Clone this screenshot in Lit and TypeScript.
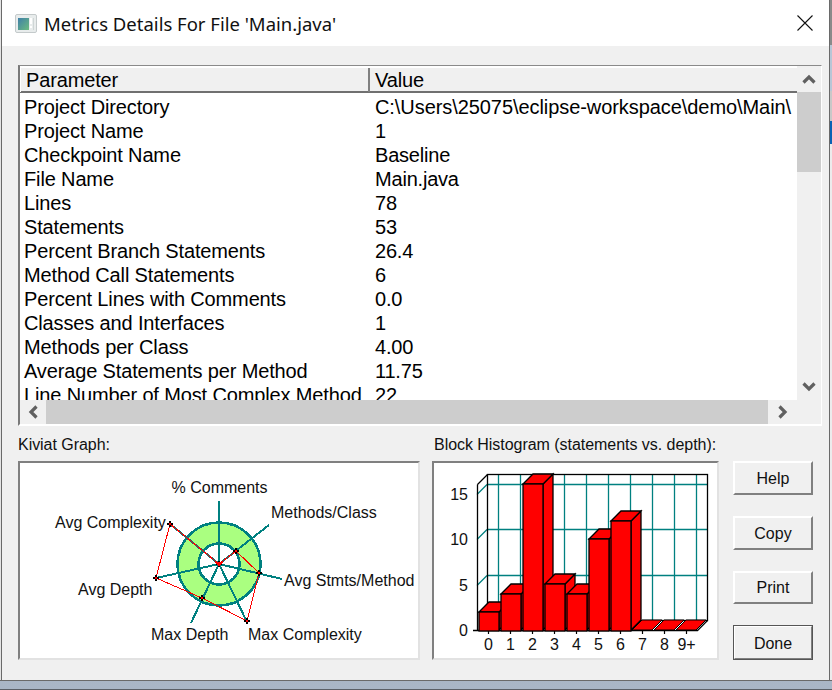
import { LitElement, html, css, svg } from "lit";
import { customElement } from "lit/decorators.js";

const ROWS: [string, string][] = [
  ["Project Directory", "C:\\Users\\25075\\eclipse-workspace\\demo\\Main\\"],
  ["Project Name", "1"],
  ["Checkpoint Name", "Baseline"],
  ["File Name", "Main.java"],
  ["Lines", "78"],
  ["Statements", "53"],
  ["Percent Branch Statements", "26.4"],
  ["Method Call Statements", "6"],
  ["Percent Lines with Comments", "0.0"],
  ["Classes and Interfaces", "1"],
  ["Methods per Class", "4.00"],
  ["Average Statements per Method", "11.75"],
  ["Line Number of Most Complex Method", "22"],
];

const CENTER = [219, 564];
const SPOKES = [
  [219, 501],
  [269, 525],
  [282, 579],
  [247, 622],
  [191, 623],
  [156, 578],
  [170, 524],
];
const POLY = [
  [219, 564],
  [236, 551],
  [259, 573],
  [247, 621],
  [202, 598],
  [156, 578],
  [170, 524],
];
const KIVIAT_LABELS: [string, number, number][] = [
  ["% Comments", 171.5, 493],
  ["Methods/Class", 271, 518],
  ["Avg Complexity", 55, 528],
  ["Avg Stmts/Method", 284, 586],
  ["Avg Depth", 78, 595],
  ["Max Depth", 151, 640],
  ["Max Complexity", 248, 640],
];

const BARS = [18, 36, 146, 46, 36, 91, 109, 0, 0, 0];
const X_LABELS = ["0", "1", "2", "3", "4", "5", "6", "7", "8", "9+"];
const Y_LABELS: [string, number][] = [
  ["15", 500],
  ["10", 545],
  ["5", 591],
  ["0", 636],
];
const GRID_X = [498, 520, 542, 564, 586, 608, 630, 652, 674, 696];
const GRID_Y = [484, 529, 575];

const chevron = (d: string) => html`<svg class="chev" viewBox="0 0 14 14" width="14" height="14">
  <path d=${d} fill="none" stroke="#606060" stroke-width="3.2"></path>
</svg>`;

@customElement("app-root")
export class AppRoot extends LitElement {
  static styles = css`
    :host {
      display: block;
      width: 832px;
      height: 690px;
      box-sizing: border-box;
      overflow: hidden;
      border-bottom: 1px solid #5a5f66;
      background: linear-gradient(#c9d3de, #a9b6c6);
      font-family: "Liberation Sans", Arial, sans-serif;
      color: #000;
    }
    .desk {
      display: flex;
      height: 680px;
      border-bottom: 1px solid #6a6a6a;
      box-sizing: content-box;
    }
    .edge-left {
      width: 1px;
      background: #e4e4e4;
    }
    .edge-right {
      width: 2px;
      display: flex;
      flex-direction: column;
    }
    .edge-right i {
      display: block;
    }
    .e1 { height: 45px; background: #8a8a8a; }
    .e2 { height: 46px; background: #b8c6d6; }
    .e3 { height: 30px; background: #c8c8c8; }
    .e4 { height: 23px; background: #0a62b4; }
    .e5 { flex: 1; background: #ececec; }
    .window {
      width: 829px;
      box-sizing: border-box;
      border-left: 1px solid #6a6a6a;
      border-right: 1px solid #6a6a6a;
      display: flex;
      flex-direction: column;
      background: #f0f0f0;
    }
    .titlebar {
      height: 46px;
      flex: none;
      background: #fff;
      display: flex;
      align-items: center;
      padding: 0 16px 0 13px;
      gap: 7px;
    }
    .title {
      flex: 1;
      font-family: "Noto Sans", sans-serif;
      font-size: 18.5px;
      color: #111;
      white-space: nowrap;
    }
    .body {
      flex: 1;
      display: flex;
      flex-direction: column;
      padding: 19px 7px 19px 16px;
      min-height: 0;
    }
    .frame {
      height: 361px;
      box-sizing: border-box;
      border-top: 1px solid #8a8a8a;
      border-left: 2px solid #7a7a7a;
      border-right: 1px solid #fff;
      border-bottom: 2px solid #fff;
      display: grid;
      grid-template-columns: 777px 24px;
      grid-template-rows: 334px 24px;
    }
    .list {
      background: #fff;
      overflow: hidden;
      display: flex;
      flex-direction: column;
      padding-top: 1px;
      letter-spacing: -0.14px;
    }
    .head {
      display: grid;
      grid-template-columns: 348px 1fr;
      height: 26px;
      flex: none;
      box-sizing: border-box;
      border-top: 1px solid #fff;
      border-bottom: 2px solid #707070;
      background: #f0f0f0;
      font-size: 20px;
      line-height: 24px;
    }
    .head div {
      padding-left: 5px;
      border-left: 1px solid #fff;
    }
    .head div + div {
      border-left: 2px solid #808080;
      padding-left: 5px;
    }
    .rows {
      padding-top: 2px;
    }
    .row {
      display: grid;
      grid-template-columns: 350px 1fr;
      height: 24px;
      line-height: 24px;
      font-size: 20px;
      white-space: nowrap;
    }
    .row div:first-child {
      padding-left: 4px;
    }
    .row div:last-child {
      padding-left: 5px;
      overflow: hidden;
      letter-spacing: -0.2px;
    }
    .row:first-child div:last-child {
      letter-spacing: -0.07px;
    }
    .vbar {
      display: flex;
      flex-direction: column;
      background: #f0f0f0;
    }
    .vbar .thumb {
      height: 80px;
      flex: none;
      background: #cdcdcd;
    }
    .vbar .spacer {
      flex: 1;
    }
    .btnv {
      height: 26px;
      flex: none;
      display: flex;
      align-items: center;
      justify-content: center;
    }
    .hbar {
      display: flex;
      background: #f0f0f0;
    }
    .hbar .btnh {
      width: 26px;
      flex: none;
      display: flex;
      align-items: center;
      justify-content: center;
    }
    .hbar .btnh.end {
      width: 29px;
    }
    .hbar .thumb {
      flex: 1;
      background: #cdcdcd;
    }
    .corner {
      background: #f0f0f0;
    }
    .chev {
      display: block;
    }
    .lower {
      flex: 1;
      display: grid;
      grid-template-columns: 402px 287px 80px;
      column-gap: 12px;
      grid-template-rows: 35px 199px;
    }
    .lower .cap {
      font-size: 16px;
      line-height: 38px;
      white-space: nowrap;
      color: #111;
      letter-spacing: -0.04px;
    }
    .cap.h {
      padding-left: 2px;
    }
    .box {
      box-sizing: border-box;
      border-top: 2px solid #808080;
      border-left: 2px solid #808080;
      border-right: 2px solid #e2e2e2;
      border-bottom: 2px solid #e2e2e2;
      background: #fff;
      overflow: hidden;
    }
    .box svg {
      display: block;
    }
    .box text {
      font-family: "Liberation Sans", Arial, sans-serif;
      font-size: 16px;
      fill: #111;
    }
    .btns {
      grid-column: 3;
      grid-row: 2;
      display: flex;
      flex-direction: column;
      gap: 21px;
      margin-left: 2px;
      width: 80px;
    }
    .btn {
      height: 34px;
      box-sizing: border-box;
      border-top: 2px solid #fff;
      border-left: 2px solid #fff;
      border-right: 2px solid #808080;
      border-bottom: 2px solid #808080;
      background: #f0f0f0;
      font-family: inherit;
      font-size: 16px;
      color: #111;
      padding: 2px 0 0;
    }
    .btn.def {
      outline: 1px solid #555;
      outline-offset: -1px;
      height: 35px;
    }
  `;

  private kiviat() {
    return svg`<svg width="398" height="195" viewBox="20 463 398 195">
      <g shape-rendering="crispEdges">
        <circle cx="219" cy="564" r="41.5" fill="#aaff80" stroke="#008080" stroke-width="2.6"></circle>
        <circle cx="219" cy="564" r="20.5" fill="#fff" stroke="#008080" stroke-width="2.6"></circle>
        ${SPOKES.map(
          ([x, y]) =>
            svg`<line x1=${CENTER[0]} y1=${CENTER[1]} x2=${x} y2=${y} stroke="#008080" stroke-width="2"></line>`
        )}
        <polygon points=${POLY.map((p) => p.join(",")).join(" ")} fill="none" stroke="#ff0000" stroke-width="1"></polygon>
        ${POLY.map(
          ([x, y]) => svg`<path d="M${x - 3} ${y}H${x + 3}M${x} ${y - 3}V${y + 3}" stroke="#000" stroke-width="2" fill="none"></path>
            <rect x=${x - 1} y=${y - 1} width="2" height="2" fill="#f00"></rect>`
        )}
        <polygon points="215,562 223,562 219,567" fill="#f00"></polygon>
      </g>
      ${KIVIAT_LABELS.map(([t, x, y]) => svg`<text x=${x} y=${y}>${t}</text>`)}
    </svg>`;
  }

  private bar(i: number, h: number) {
    const x = 479 + 22 * i;
    const base = 630;
    const top = base - h;
    if (h === 0) {
      const xf = 632 + 22 * (i - 7);
      return svg`<polygon points="${xf},630 ${xf + 10},620 ${xf + 30},620 ${xf + 20},630" fill="#f00" stroke="#000" stroke-width="1"></polygon>
        ${i > 7 ? svg`<line x1=${xf - 1} y1="630" x2=${xf + 7} y2="622" stroke="#fff" stroke-width="1"></line>` : null}`;
    }
    return svg`
      <polygon points="${x + 20},${top} ${x + 30},${top - 10} ${x + 30},${base - 10} ${x + 20},${base}" fill="#f00" stroke="#000" stroke-width="1.3"></polygon>
      <polygon points="${x},${top} ${x + 10},${top - 10} ${x + 30},${top - 10} ${x + 20},${top}" fill="#f00" stroke="#000" stroke-width="1.3"></polygon>
      <rect x=${x} y=${top} width="20" height=${h + 1} fill="#f00" stroke="#000" stroke-width="1.3"></rect>`;
  }

  private histogram() {
    return svg`<svg width="283" height="195" viewBox="434 463 283 195">
      <g fill="none">
        ${GRID_X.map((x) => svg`<line x1=${x + 0.5} y1="474" x2=${x + 0.5} y2="620" stroke="#008080" stroke-width="1.3"></line>`)}
        ${GRID_Y.map((y) => svg`<line x1="487" y1=${y + 0.5} x2="707" y2=${y + 0.5} stroke="#008080" stroke-width="1.3"></line>`)}
        ${GRID_Y.map((y) => svg`<line x1="477" y1=${y + 10.5} x2="487" y2=${y + 0.5} stroke="#008080" stroke-width="1.2"></line>`)}
        <rect x="487.5" y="474.5" width="220" height="146" stroke="#000" stroke-width="1.3"></rect>
        <path d="M477.5 484.5L487.5 474.5M477.5 484.5V630.5H697.5L707.5 620.5M473 630.5H477" stroke="#000" stroke-width="1.3"></path>
        ${X_LABELS.map((_, i) => svg`<line x1=${488.5 + 22 * i} y1="630" x2=${488.5 + 22 * i} y2="634" stroke="#000" stroke-width="1.2"></line>`)}
        ${BARS.map((h, i) => this.bar(i, h))}
      </g>
      ${X_LABELS.map((t, i) => svg`<text x=${488.5 + 22 * i} y="650" text-anchor="middle">${t}</text>`)}
      ${Y_LABELS.map(([t, y]) => svg`<text x="468" y=${y} text-anchor="end">${t}</text>`)}
    </svg>`;
  }

  render() {
    return html`
      <div class="desk">
        <div class="edge-left"></div>
        <div class="window">
          <div class="titlebar">
            <svg width="22" height="19" viewBox="0 0 22 19">
              <rect x="0.5" y="0.5" width="21" height="18" rx="1.5" fill="#e8ecec" stroke="#c4cacb"></rect>
              <defs>
                <linearGradient id="ig" x1="0" y1="0" x2="1" y2="1">
                  <stop offset="0" stop-color="#3f7fa8"></stop>
                  <stop offset="1" stop-color="#6cbc80"></stop>
                </linearGradient>
              </defs>
              <rect x="3" y="4" width="11" height="12" fill="url(#ig)"></rect>
              <rect x="15" y="4" width="2" height="6" fill="#fff"></rect>
              <rect x="15" y="12" width="2" height="2" fill="#fff"></rect>
              <rect x="18" y="4" width="1" height="12" fill="#cfd6d6"></rect>
            </svg>
            <div class="title">Metrics Details For File 'Main.java'</div>
            <svg width="16" height="16" viewBox="0 0 16 16">
              <path d="M0.5 0.5L15.5 15.5M15.5 0.5L0.5 15.5" stroke="#111" stroke-width="1.1" fill="none"></path>
            </svg>
          </div>
          <div class="body">
            <div class="frame">
              <div class="list">
                <div class="head"><div>Parameter</div><div>Value</div></div>
                <div class="rows">
                  ${ROWS.map(([p, v]) => html`<div class="row"><div>${p}</div><div>${v}</div></div>`)}
                </div>
              </div>
              <div class="vbar">
                <div class="btnv">${chevron("M1.5 10.5L7 5L12.5 10.5")}</div>
                <div class="thumb"></div>
                <div class="spacer"></div>
                <div class="btnv">${chevron("M1.5 3.5L7 9L12.5 3.5")}</div>
              </div>
              <div class="hbar">
                <div class="btnh">${chevron("M10.5 1.5L5 7L10.5 12.5")}</div>
                <div class="thumb"></div>
                <div class="btnh end">${chevron("M3.5 1.5L9 7L3.5 12.5")}</div>
              </div>
              <div class="corner"></div>
            </div>
            <div class="lower">
              <div class="cap">Kiviat Graph:</div>
              <div class="cap h">Block Histogram (statements vs. depth):</div>
              <div></div>
              <div class="box">${this.kiviat()}</div>
              <div class="box">${this.histogram()}</div>
              <div class="btns">
                <button class="btn">Help</button>
                <button class="btn">Copy</button>
                <button class="btn">Print</button>
                <button class="btn def">Done</button>
              </div>
            </div>
          </div>
        </div>
        <div class="edge-right">
          <i class="e1"></i><i class="e2"></i><i class="e3"></i><i class="e4"></i><i class="e5"></i>
        </div>
      </div>
    `;
  }
}
